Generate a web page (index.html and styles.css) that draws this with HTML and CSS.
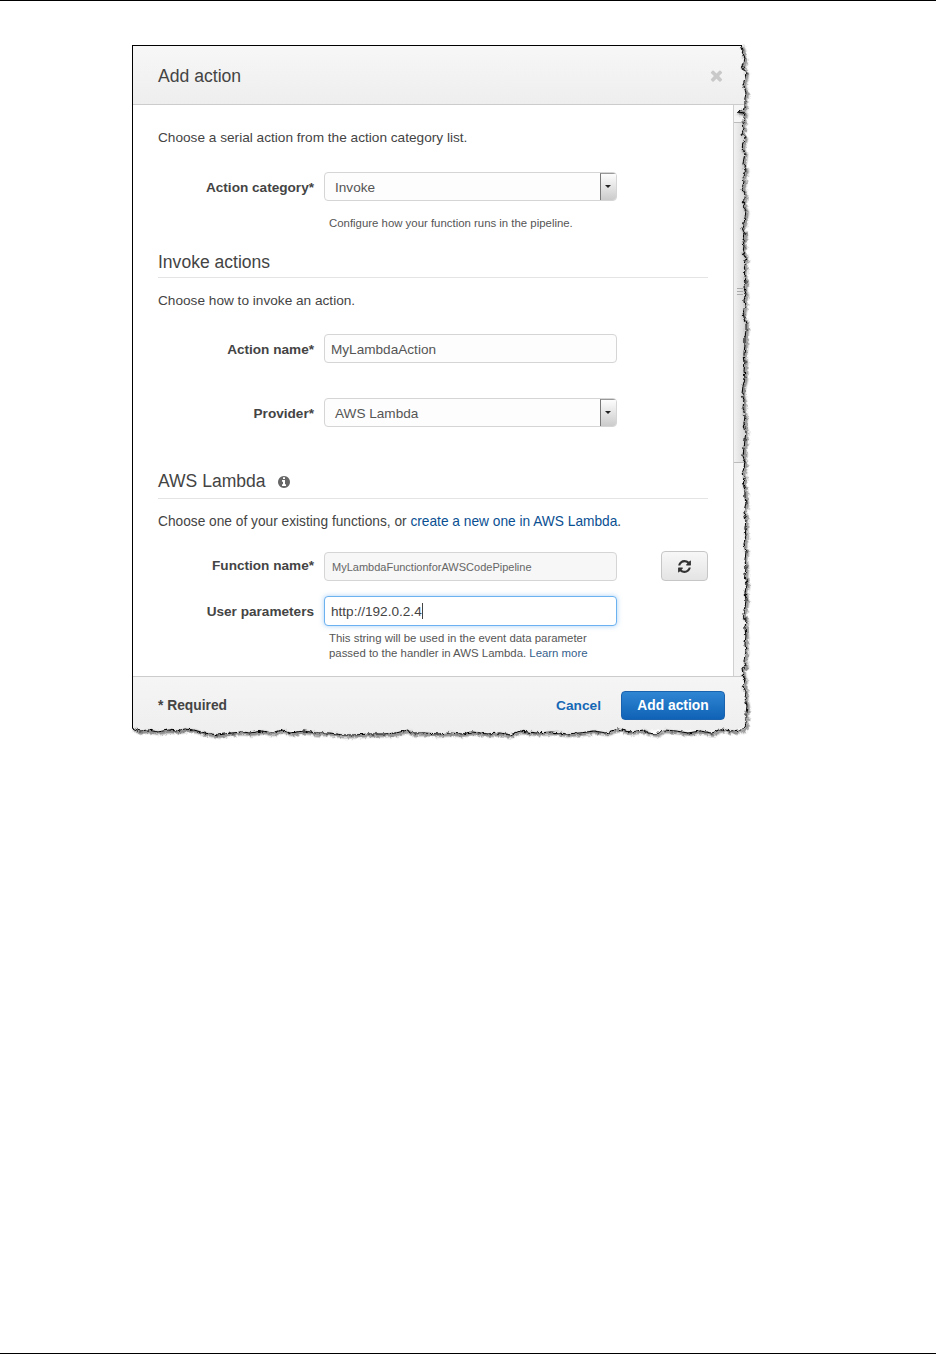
FILE: index.html
```html
<!DOCTYPE html>
<html lang="en">
<head>
<meta charset="utf-8">
<title>Add action</title>
<link rel="stylesheet" href="styles.css">
</head>
<body>
<div class="page">
  <section class="dialog">
    <header class="dialog-head">
      <h2 class="dialog-title">Add action</h2>
      <svg class="close-icon" viewBox="0 0 1792 1792"><path d="M1490 1322q0 40-28 68l-136 136q-28 28-68 28t-68-28l-294-294-294 294q-28 28-68 28t-68-28l-136-136q-28-28-28-68t28-68l294-294-294-294q-28-28-28-68t28-68l136-136q28-28 68-28t68 28l294 294 294-294q28-28 68-28t68 28l136 136q28 28 28 68t-28 68l-294 294 294 294q28 28 28 68z"/></svg>
    </header>
    <div class="dialog-body">
      <div class="content">
        <p class="lead lead-first">Choose a serial action from the action category list.</p>
        <div class="field field-category">
          <label class="field-label">Action category*</label>
          <div class="control select"><span class="select-text">Invoke</span><span class="select-arrow"></span></div>
        </div>
        <p class="help help-category">Configure how your function runs in the pipeline.</p>

        <h3 class="section section-invoke">Invoke actions</h3>
        <p class="lead lead-invoke">Choose how to invoke an action.</p>
        <div class="field field-name">
          <label class="field-label">Action name*</label>
          <div class="control input">MyLambdaAction</div>
        </div>
        <div class="field field-provider">
          <label class="field-label">Provider*</label>
          <div class="control select"><span class="select-text">AWS Lambda</span><span class="select-arrow"></span></div>
        </div>

        <h3 class="section section-lambda">AWS Lambda
          <svg class="info-icon" viewBox="0 0 1792 1792"><path d="M1152 1376v-160q0-14-9-23t-23-9h-96v-512q0-14-9-23t-23-9h-320q-14 0-23 9t-9 23v160q0 14 9 23t23 9h96v320h-96q-14 0-23 9t-9 23v160q0 14 9 23t23 9h448q14 0 23-9t9-23zm-128-896v-160q0-14-9-23t-23-9h-192q-14 0-23 9t-9 23v160q0 14 9 23t23 9h192q14 0 23-9t9-23zm640 416q0 209-103 385.5t-279.5 279.5-385.5 103-385.5-103-279.5-279.5-103-385.5 103-385.5 279.5-279.5 385.5-103 385.5 103 279.5 279.5 103 385.5z"/></svg>
        </h3>
        <p class="lead lead-lambda">Choose one of your existing functions, or <a class="link">create a new one in AWS Lambda</a>.</p>
        <div class="field field-function">
          <label class="field-label field-label-raised">Function name*</label>
          <div class="control input input-small">MyLambdaFunctionforAWSCodePipeline</div>
          <button class="refresh" type="button" aria-label="Refresh">
            <svg class="refresh-icon" viewBox="0 0 1792 1792"><path d="M1639 1056q0 5-1 7-64 268-268 434.5t-478 166.5q-146 0-282.5-55t-243.5-157l-129 129q-19 19-45 19t-45-19-19-45v-448q0-26 19-45t45-19h448q26 0 45 19t19 45-19 45l-137 137q71 66 161 102t187 36q134 0 250-65t186-179q11-17 53-117 8-23 30-23h192q13 0 22.5 9.5t9.5 22.5zm25-800v448q0 26-19 45t-45 19h-448q-26 0-45-19t-19-45 19-45l138-138q-148-137-349-137-134 0-250 65t-186 179q-11 17-53 117-8 23-30 23h-199q-13 0-22.5-9.5t-9.5-22.5v-7q65-268 270-434.5t480-166.5q146 0 284 55.5t245 156.5l130-129q19-19 45-19t45 19 19 45z"/></svg>
          </button>
        </div>
        <div class="field field-params">
          <label class="field-label">User parameters</label>
          <div class="control input input-focus">http://192.0.2.4<span class="caret"></span></div>
        </div>
        <p class="help help-params">This string will be used in the event data parameter<br>passed to the handler in AWS Lambda. <a class="link-soft">Learn more</a></p>
      </div>
      <div class="scrollbar"><div class="scroll-up"></div><div class="scroll-thumb"><span class="scroll-grip"></span></div></div>
    </div>
    <footer class="dialog-foot">
      <span class="required">* Required</span>
      <a class="cancel">Cancel</a>
      <button class="primary" type="button">Add action</button>
    </footer>
  </section>

  <svg class="torn" viewBox="0 0 936 760" aria-hidden="true">
    <defs>
      <filter id="rough" x="0" y="0" width="936" height="760" filterUnits="userSpaceOnUse" primitiveUnits="userSpaceOnUse">
        <feTurbulence type="fractalNoise" baseFrequency="0.28" numOctaves="2" seed="7"/>
        <feDisplacementMap in="SourceGraphic" scale="4" xChannelSelector="R" yChannelSelector="G"/>
      </filter>
      <filter id="soft" x="-10%" y="-10%" width="120%" height="120%"><feGaussianBlur stdDeviation="0.9"/></filter>
      <path id="tear" d="M741 45 L743 50 L742 54 L745 58 L744 62 L742 65 L744 69 L746 73 L745 78 L743 85 L745 89 L746 93 L745 98 L745 103 L745 108 L738 112 L745 113 L743 122 L744 128 L742 133 L745 138 L743 143 L742 149 L745 153 L744 158 L743 164 L746 170 L743 176 L744 182 L742 188 L745 193 L744 199 L743 205 L746 211 L745 217 L744 223 L742 228 L745 234 L743 240 L744 246 L743 252 L746 258 L744 264 L745 270 L744 276 L746 282 L744 288 L746 294 L744 300 L745 306 L743 312 L744 318 L746 324 L746 330 L745 338 L745 346 L744 354 L745 362 L744 370 L745 378 L743 386 L742 394 L744 400 L743 408 L745 416 L744 424 L746 432 L745 440 L744 448 L743 456 L745 462 L744 468 L742 474 L745 478 L743 484 L745 490 L745 496 L746 504 L744 512 L746 520 L745 528 L746 536 L744 544 L746 552 L745 560 L746 568 L745 576 L747 584 L745 592 L746 600 L745 608 L743 614 L746 620 L745 628 L746 636 L745 644 L746 652 L744 660 L746 666 L742 668 L743 674 L745 680 L743 686 L746 692 L745 698 L747 706 L746 714 L746 722 L745 727 L741 730 L730 731 L722 729 L712 733 L700 731 L688 733 L676 731 L664 730 L656 734 L648 733 L644 730 L630 732 L618 729 L606 733 L594 731 L580 733 L566 734 L552 732 L536 733 L520 731 L510 735 L500 733 L488 734 L472 732 L462 734 L450 733 L438 734 L424 733 L410 733 L408 730 L396 733 L384 734 L370 734 L354 735 L342 735 L330 733 L316 733 L304 731 L290 733 L282 730 L272 733 L262 731 L250 733 L242 732 L232 733 L218 735 L204 733 L194 730 L185 729 L176 731 L168 730 L158 732 L148 730 L140 731 L132 728"/>
    </defs>
    <g filter="url(#rough)">
      <path class="torn-paper" d="M741 45 L745 73 L743 122 L745 234 L745 400 L746 552 L746 692 L745 727 L730 731 L664 730 L566 734 L450 733 L354 735 L282 730 L218 735 L158 732 L132 728 L120 728 L120 770 L950 770 L950 45 Z"/>
      <use href="#tear" class="torn-shadow" transform="translate(1.5 1.5)" filter="url(#soft)"/>
      <use href="#tear" class="torn-line"/>
    </g>
  </svg>
</div>
</body>
</html>
```
FILE: styles.css
```css
* { box-sizing: border-box; }
html, body { margin: 0; padding: 0; background: #fff; }
.page {
  position: relative;
  height: 1354px;
  border-top: 1px solid #000;
  border-bottom: 1px solid #000;
  padding: 44px 0 0 132px;
  font-family: "Liberation Sans", Arial, sans-serif;
  color: #444;
  overflow: hidden;
}
.dialog {
  width: 616px;
  height: 692px;
  border-left: 1px solid #000;
  border-top: 1px solid #000;
  display: flex;
  flex-direction: column;
}
.dialog-head {
  height: 59px;
  flex: none;
  display: flex;
  align-items: center;
  justify-content: space-between;
  padding: 2px 0 0 25px;
  background: linear-gradient(#f7f7f7, #eeeeee);
  border-bottom: 1px solid #ccc;
}
.dialog-title { margin: 0; font-size: 17.6px; font-weight: 400; color: #444; line-height: 22px; }
.close-icon { width: 17px; height: 17px; fill: #c9c9c9; margin-right: 23px; margin-bottom: 2px; }
.dialog-body { flex: 1; display: flex; min-height: 0; }
.content { width: 600px; flex: none; padding: 0 25px; }
.scrollbar { flex: 1; background: #f3f3f3; border-left: 1px solid #d0d0d0; display: flex; flex-direction: column; }
.scroll-up { height: 17px; background: #f6f6f6; }
.scroll-thumb {
  position: relative;
  height: 341px;
  background: linear-gradient(90deg, #f2f2f2, #d0d0d0);
  border: 1px solid #bbb;
  border-width: 1px 0;
}
.scroll-grip {
  position: absolute;
  left: 3px;
  top: 165px;
  width: 6px;
  height: 7px;
  border-top: 1px solid #aaa;
  border-bottom: 1px solid #aaa;
  background: linear-gradient(transparent 2px, #aaa 2px, #aaa 3px, transparent 3px);
}

.lead { margin: 0; font-size: 13.65px; line-height: 18px; color: #444; }
.lead-first { margin-top: 24px; }
.lead-invoke { margin-top: 14px; }
.lead-lambda { margin-top: 14px; font-size: 13.72px; }
.link { color: #0a4f92; }
.link-soft { color: #35608c; }

.field { display: flex; align-items: center; }
.field-label { width: 156px; flex: none; margin-top: 2px; text-align: right; font-size: 13.6px; font-weight: 700; color: #444; line-height: 18px; }
.field-label-raised { margin-bottom: 3px; }
.control {
  width: 293px;
  height: 29px;
  margin-left: 10px;
  flex: none;
  border: 1px solid #d5d5d5;
  border-radius: 4px;
  background: #fdfdfd;
  font-size: 13.6px;
  line-height: 29px;
  color: #555;
}
.input { padding-left: 6px; }
.input-small { font-size: 11px; color: #666; padding-left: 7px; background: #f7f7f7; }
.input-focus { height: 30px; line-height: 30px; border-color: #6cb2f0; background: #fff; box-shadow: 0 0 5px rgba(80, 160, 240, .5); color: #444; }
.caret { display: inline-block; width: 1px; height: 16px; background: #444; vertical-align: -3px; }
.select { display: flex; justify-content: space-between; padding-left: 10px; overflow: hidden; }
.select-arrow {
  position: relative;
  width: 16px;
  height: 27px;
  flex: none;
  border-left: 1px solid #777;
  border-top: 1px solid #999;
  background: linear-gradient(#fdfdfd, #cbcbcb);
}
.select-arrow::after {
  content: "";
  position: absolute;
  left: 4px;
  top: 11px;
  border: 3px solid transparent;
  border-top-color: #222;
  border-bottom: 0;
}
.field-category { margin-top: 25px; }
.help { margin: 0 0 0 171px; font-size: 11.4px; line-height: 15px; color: #555; }
.help-category { margin-top: 15px; }
.help-params { margin-top: 5px; }

.section {
  margin: 0;
  font-size: 17.55px;
  font-weight: 400;
  line-height: 22px;
  color: #444;
  padding-bottom: 4px;
  border-bottom: 1px solid #e4e4e4;
}
.section-invoke { margin-top: 20px; }
.section-lambda { margin-top: 43px; padding-bottom: 6px; }
.info-icon { width: 14px; height: 14px; fill: #666; margin-left: 7px; vertical-align: -2px; }

.field-name { margin-top: 24px; }
.field-provider { margin-top: 35px; }
.field-function { margin-top: 21px; }
.field-params { margin-top: 15px; }
.refresh {
  width: 48px;
  height: 30px;
  margin-left: 44px;
  margin-top: -1px;
  padding: 0;
  border: 1px solid #c6c6c6;
  border-radius: 4px;
  background: linear-gradient(#f7f7f7, #e4e4e4);
  display: flex;
  align-items: center;
  justify-content: center;
}
.refresh-icon { width: 15px; height: 15px; fill: #333; }

.dialog-foot {
  height: 61px;
  flex: none;
  display: flex;
  align-items: center;
  padding: 0 23px 3px 25px;
  background: linear-gradient(#f5f5f5, #eeeeee);
  border-top: 1px solid #ccc;
}
.required { font-size: 13.8px; font-weight: 700; color: #444; margin-right: auto; }
.cancel { font-size: 13.7px; font-weight: 700; color: #1568b5; margin-right: 20px; }
.primary {
  width: 104px;
  height: 29px;
  padding: 0;
  border: 1px solid #1a62ad;
  border-radius: 4px;
  background: linear-gradient(#2f86d2, #1062b6);
  color: #fff;
  font-family: inherit;
  font-size: 13.8px;
  font-weight: 700;
}

.torn { position: absolute; left: 0; top: -1px; width: 936px; height: 760px; pointer-events: none; }
.torn-paper { fill: #fff; }
.torn-shadow { fill: none; stroke: #444; stroke-width: 1.8; }
.torn-line { fill: none; stroke: #000; stroke-width: 1; }
```
